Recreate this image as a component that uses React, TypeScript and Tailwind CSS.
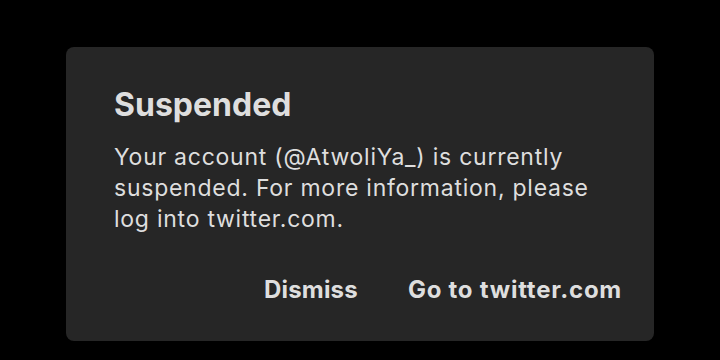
import React from 'react'

export default function App() {
  return (
    <div className="w-[720px] h-[360px] bg-black flex items-start justify-center pt-[47px]" style={{ fontFamily: 'Inter, "Noto Sans", sans-serif' }}>
      <div className="w-[588px] h-[294px] bg-[#262626] rounded-[8px] flex flex-col">
        <div className="px-12 pt-[40px]">
          <h1 className="text-[32px] leading-[36px] font-bold text-[#dedede]">Suspended</h1>
          <p className="mt-[19px] text-[23px] leading-[31px] tracking-[0.75px] text-[#dedede]">
            Your account (@AtwoliYa_) is currently suspended. For more information, please log into twitter.com.
          </p>
        </div>
        <div className="flex justify-end items-center mt-auto mb-[36px] pr-[32px] gap-[50px]">
          <button className="text-[24px] leading-[30px] font-bold tracking-[0.2px] text-[#dedede]">Dismiss</button>
          <button className="text-[24px] leading-[30px] font-bold tracking-[0.75px] text-[#dedede]">Go to twitter.com</button>
        </div>
      </div>
    </div>
  )
}
